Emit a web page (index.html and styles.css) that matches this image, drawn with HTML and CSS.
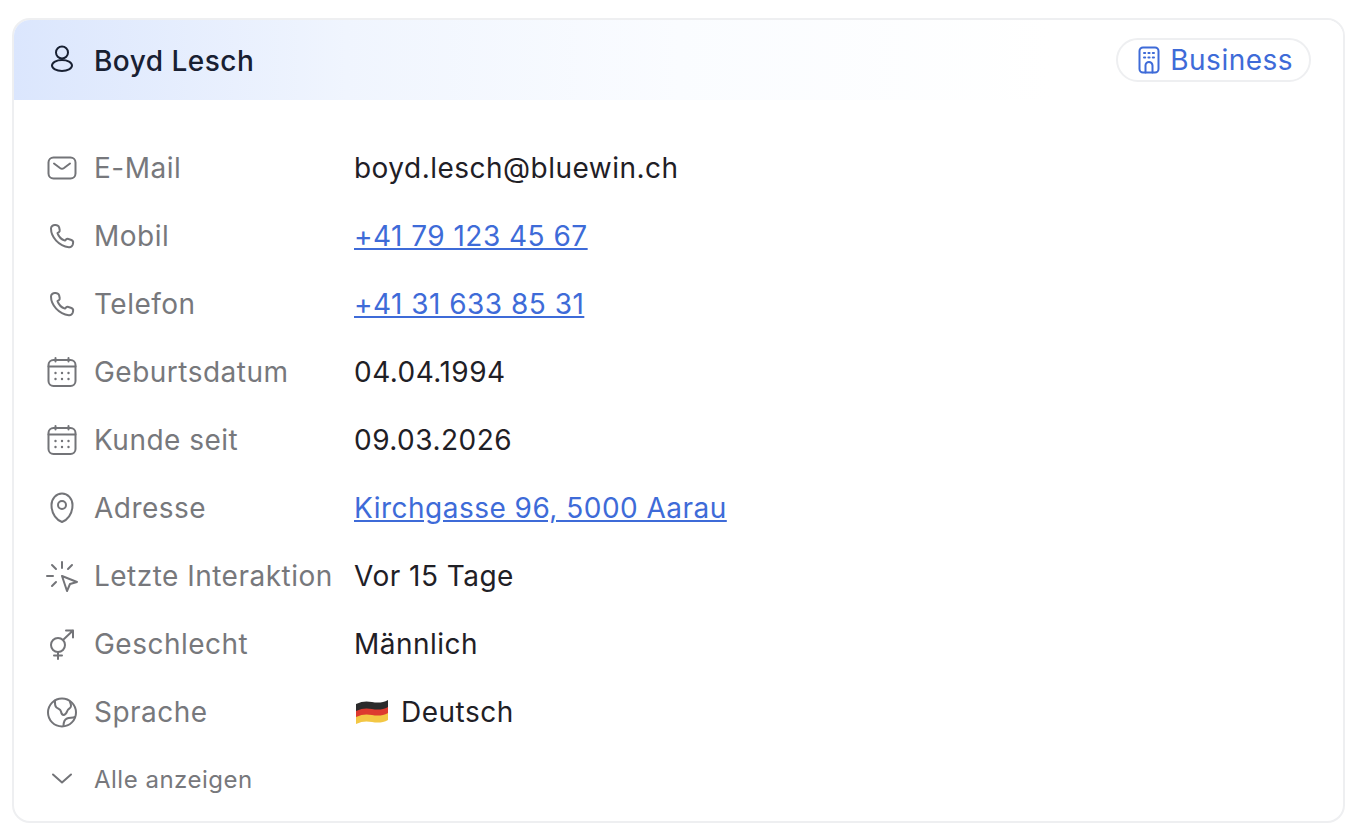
FILE: index.html
```html
<!DOCTYPE html>
<html lang="de">
<head>
  <meta charset="UTF-8">
  <meta name="viewport" content="width=device-width, initial-scale=1">
  <title>Boyd Lesch</title>
  <link rel="stylesheet" href="styles.css">
</head>
<body>
  <section class="card">
    <header class="card-head">
      <div class="person">
        <svg class="icon icon-dark" viewBox="0 0 32 32"><circle cx="16" cy="8.500" r="6"/><ellipse cx="16" cy="21.500" rx="10" ry="5.500"/></svg>
        <h2 class="name">Boyd Lesch</h2>
      </div>
      <span class="badge">
        <svg class="badge-icon" viewBox="0 0 28 28"><rect x="4.500" y="1.500" width="19" height="25" rx="3.500"/><path d="M9 7h1.200M13.400 7h1.200M17.800 7h1.200M9 11.500h1.200M13.400 11.500h1.200M17.800 11.500h1.200M10.500 26.500v-7a3.500 3.500 0 0 1 7 0v7"/></svg>
        Business
      </span>
    </header>

    <dl class="rows">
      <div class="row">
        <dt class="label">
          <svg class="icon" viewBox="0 0 32 32"><rect x="2.500" y="5.500" width="27" height="21" rx="5"/><path d="M8 11.500l6 4.500a3.500 3.500 0 0 0 4 0l6-4.500"/></svg>
          E-Mail
        </dt>
        <dd class="value">boyd.lesch@bluewin.ch</dd>
      </div>
      <div class="row">
        <dt class="label">
          <svg class="icon" viewBox="0 0 32 32"><path d="M5 8.500C5 6.500 7 4.600 9.700 5.100l1.800.4c.8.3 1.400 1 1.600 1.800l.6 2.700c.2 1-.2 1.800-1 2.300l-1.200.8c1 3 3.700 6.300 7.500 7.500l1-1.100c.7-.7 1.600-.9 2.500-.5l2.900 1c1.200.5 2 1.700 1.700 3l-.4 1.800c-.5 1.500-2 2.600-3.900 2.400C12.800 26 5 17 5 8.500z"/></svg>
          Mobil
        </dt>
        <dd class="value"><a href="#">+41 79 123 45 67</a></dd>
      </div>
      <div class="row">
        <dt class="label">
          <svg class="icon" viewBox="0 0 32 32"><path d="M5 8.500C5 6.500 7 4.600 9.700 5.100l1.800.4c.8.3 1.400 1 1.600 1.800l.6 2.700c.2 1-.2 1.800-1 2.300l-1.200.8c1 3 3.700 6.300 7.500 7.500l1-1.100c.7-.7 1.600-.9 2.500-.5l2.900 1c1.200.5 2 1.700 1.700 3l-.4 1.800c-.5 1.500-2 2.600-3.900 2.400C12.800 26 5 17 5 8.500z"/></svg>
          Telefon
        </dt>
        <dd class="value"><a href="#">+41 31 633 85 31</a></dd>
      </div>
      <div class="row">
        <dt class="label">
          <svg class="icon" viewBox="0 0 32 32"><rect x="2.500" y="4" width="27" height="26" rx="5"/><path d="M2.500 10.500h27M9.500 2v3.500M22.500 2v3.500"/><path class="dots" d="M9.500 17h.01M16 17h.01M22.500 17h.01M9.500 23h.01M16 23h.01M22.500 23h.01"/></svg>
          Geburtsdatum
        </dt>
        <dd class="value">04.04.1994</dd>
      </div>
      <div class="row">
        <dt class="label">
          <svg class="icon" viewBox="0 0 32 32"><rect x="2.500" y="4" width="27" height="26" rx="5"/><path d="M2.500 10.500h27M9.500 2v3.500M22.500 2v3.500"/><path class="dots" d="M9.500 17h.01M16 17h.01M22.500 17h.01M9.500 23h.01M16 23h.01M22.500 23h.01"/></svg>
          Kunde seit
        </dt>
        <dd class="value">09.03.2026</dd>
      </div>
      <div class="row">
        <dt class="label">
          <svg class="icon" viewBox="0 0 32 32"><path d="M16 30C11 28 5.500 22.500 5.500 13a10.500 11.500 0 0 1 21 0c0 9.500-5.500 15-10.500 17z"/><circle cx="16" cy="13" r="4"/></svg>
          Adresse
        </dt>
        <dd class="value"><a href="#">Kirchgasse 96, 5000 Aarau</a></dd>
      </div>
      <div class="row">
        <dt class="label">
          <svg class="icon" viewBox="0 0 32 32"><path d="M16 2v6M6 5l4 4M26 5l-4 4M1 16h6M6 26l4-4"/><path d="M16 16l15 6-7 2-3 7z"/></svg>
          Letzte Interaktion
        </dt>
        <dd class="value">Vor 15 Tage</dd>
      </div>
      <div class="row">
        <dt class="label">
          <svg class="icon" viewBox="0 0 32 32"><circle cx="12" cy="17" r="7"/><path d="M17.500 11.500L27 2.500M20 2.500h7v7M12 24v7M8 27.500h8"/></svg>
          Geschlecht
        </dt>
        <dd class="value">Männlich</dd>
      </div>
      <div class="row">
        <dt class="label">
          <svg class="icon" viewBox="0 0 32 32"><circle cx="16" cy="16.500" r="14"/><path d="M9 4.500c0 3-.5 5.500 1.500 7 2 1.500 4 1.500 4.500 4 .4 2 1 3.500 2.500 3.500 2.500 0 3-2 4-4.500.8-2 3.500-2 3.500-4.500 0-1.500-.5-3-1-4M17.500 30c0-4 1-6.500 3.500-7.500 2.500-1 5.500-.5 8-1.500"/></svg>
          Sprache
        </dt>
        <dd class="value lang">
          <svg class="flag" viewBox="0 0 34 26">
            <path fill="#2b2b2b" d="M1 5c6-3 11-3 16-2s11 1 16-2v8c-5 3-11 3-16 2S7 10 1 13z"/>
            <path fill="#dd3a2f" d="M1 12c6-3 11-3 16-2s11 1 16-2v8c-5 3-11 3-16 2S7 17 1 20z"/>
            <path fill="#f3c744" d="M1 18c6-3 11-3 16-2s11 1 16-2v7c-5 3-11 3-16 2S7 22 1 25z"/>
          </svg>
          Deutsch
        </dd>
      </div>
    </dl>

    <button class="more" type="button">
      <svg class="icon" viewBox="0 0 32 32"><path d="M7 11.500l9 8 9-8"/></svg>
      Alle anzeigen
    </button>
  </section>
</body>
</html>
```

FILE: styles.css
```css
* {
  box-sizing: border-box;
}

body {
  margin: 0;
  padding: 18px 15px 15px 12px;
  background: #fff;
  font-family: Inter, "Liberation Sans", sans-serif;
  font-size: 28px;
  letter-spacing: 0.48px;
  color: #1f2026;
}

.card {
  height: 805px;
  border: 2px solid #eeeff1;
  border-radius: 18px;
  overflow: hidden;
  background: #fff;
}

.card-head {
  height: 80px;
  padding: 0 32px;
  display: flex;
  align-items: center;
  justify-content: space-between;
  background: linear-gradient(90deg, #dbe6fd 0%, #f0f5fe 25%, #fafcff 50%, #fff 78%);
}

.person {
  display: flex;
  align-items: center;
  gap: 16px;
}

.name {
  margin: 0;
  padding-top: 2px;
  font-size: 28px;
  font-weight: 500;
  color: #182032;
}

.icon {
  flex: none;
  width: 32px;
  height: 32px;
  fill: none;
  stroke: #737478;
  stroke-width: 2;
  stroke-linecap: round;
  stroke-linejoin: round;
}

.icon-dark {
  stroke: #182032;
}

.dots {
  stroke-width: 2.400;
}

.badge {
  height: 44px;
  margin-top: -1px;
  padding: 0 16px 0 17px;
  display: flex;
  align-items: center;
  gap: 7px;
  border: 2px solid #eeeff1;
  border-radius: 22px;
  background: #fff;
  color: #3e6bd8;
}

.badge-icon {
  width: 28px;
  height: 28px;
  fill: none;
  stroke: #3e6bd8;
  stroke-width: 2;
  stroke-linecap: round;
  stroke-linejoin: round;
}

.rows {
  margin: 34px 0 0;
  padding: 0 32px;
}

.row {
  height: 68px;
  display: grid;
  grid-template-columns: 308px 1fr;
  align-items: center;
}

.label {
  display: flex;
  align-items: center;
  gap: 16px;
  color: #77787c;
  white-space: nowrap;
}

.value {
  margin: 0;
}

.value a {
  color: #3e6bd8;
}

.lang {
  display: flex;
  align-items: center;
  gap: 12px;
}

.flag {
  width: 34px;
  height: 26px;
  margin-left: 1px;
}

.more {
  height: 66px;
  margin-left: 32px;
  padding: 0;
  display: flex;
  align-items: center;
  gap: 16px;
  border: 0;
  background: none;
  font: inherit;
  font-size: 24px;
  letter-spacing: 0.5px;
  color: #77787c;
}
```
